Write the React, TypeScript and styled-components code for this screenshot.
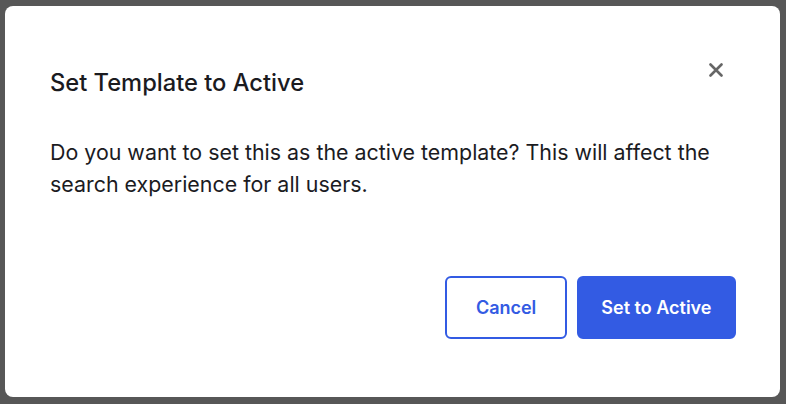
import React from 'react';
import styled, { createGlobalStyle } from 'styled-components';

const GlobalStyle = createGlobalStyle`
  html, body {
    margin: 0;
    padding: 0;
  }
  body {
    font-family: Inter, "Noto Sans", sans-serif;
    -webkit-font-smoothing: antialiased;
  }
`;

const Backdrop = styled.div`
  box-sizing: border-box;
  width: 786px;
  height: 404px;
  padding: 6px 6px 7px 5px;
  background: #575757;
  display: flex;
`;

const Dialog = styled.div`
  position: relative;
  flex: 1;
  display: flex;
  flex-direction: column;
  background: #ffffff;
  border-radius: 8px;
  padding: 0 44px 58px 45px;
`;

const Header = styled.div`
  display: flex;
  align-items: flex-start;
  justify-content: space-between;
  padding-top: 52px;
`;

const Title = styled.h2`
  margin: 10px 0 0;
  font-size: 23.7px;
  line-height: 30px;
  font-weight: 500;
  color: #1b1b1f;
`;

const CloseButton = styled.button`
  width: 24px;
  height: 24px;
  margin-right: 8px;
  padding: 0;
  border: none;
  background: none;
  display: flex;
  align-items: center;
  justify-content: center;
  color: #666666;
  cursor: pointer;
`;

const Message = styled.p`
  margin: 38px 0 0;
  font-size: 21.4px;
  line-height: 32px;
  font-weight: 400;
  color: #1b1b1f;
`;

const Footer = styled.div`
  margin-top: auto;
  display: flex;
  justify-content: flex-end;
  gap: 10px;
`;

const Button = styled.button<{ $primary?: boolean }>`
  box-sizing: border-box;
  height: 63px;
  padding: 0 ${p => (p.$primary ? '22.5px' : '28.5px')};
  border-radius: 6px;
  border: 2px solid #335be3;
  background: ${p => (p.$primary ? '#335be3' : '#ffffff')};
  color: ${p => (p.$primary ? '#ffffff' : '#335be3')};
  font-family: Inter, "Noto Sans", sans-serif;
  font-size: 18px;
  font-weight: 600;
  cursor: pointer;
`;

const CloseIcon = () => (
  <svg width="14" height="14" viewBox="0 0 14 14" fill="none">
    <path d="M1.5 1.5L12.5 12.5M12.5 1.5L1.5 12.5" stroke="currentColor" strokeWidth="2.6" strokeLinecap="round" />
  </svg>
);

export default function App() {
  return (
    <>
      <GlobalStyle />
      <Backdrop>
        <Dialog role="dialog" aria-modal="true">
          <Header>
            <Title>Set Template to Active</Title>
            <CloseButton aria-label="Close">
              <CloseIcon />
            </CloseButton>
          </Header>
          <Message>
            Do you want to set this as the active template? This will affect the search experience for all users.
          </Message>
          <Footer>
            <Button>Cancel</Button>
            <Button $primary>Set to Active</Button>
          </Footer>
        </Dialog>
      </Backdrop>
    </>
  );
}
